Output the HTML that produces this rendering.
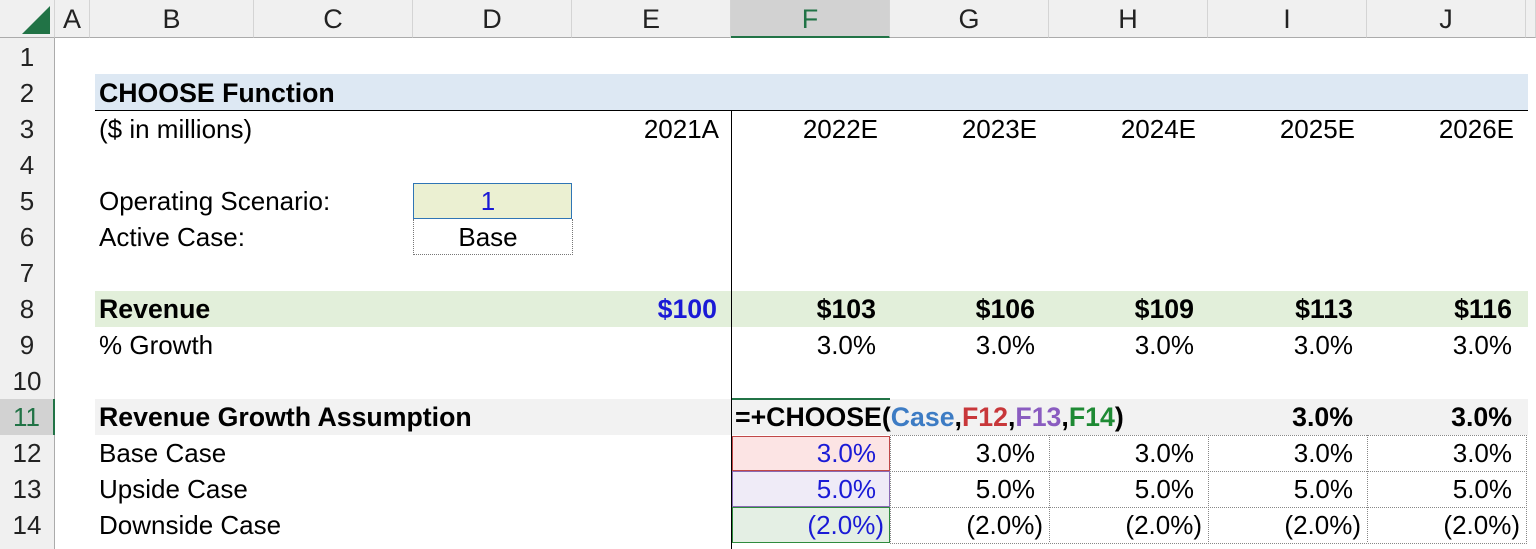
<!DOCTYPE html><html><head><style>
html,body{margin:0;width:1536px;height:549px;overflow:hidden}
body{background:#fff;font-family:"Liberation Sans",Arial,sans-serif;font-size:26px;color:#000;position:relative}
.a{position:absolute;white-space:nowrap;line-height:36px;height:36px}
.r{text-align:right}.c{text-align:center}.b{font-weight:bold;font-size:26.7px}
.hd{position:absolute;top:0;height:38px;line-height:38px;background:#f0f0f0;text-align:center;font-size:27px;color:#222;border-right:1px solid #d4d4d4;box-sizing:border-box;border-bottom:1px solid #ababab}
.rh{position:absolute;left:0;width:55px;height:36px;line-height:36px;background:#f0f0f0;text-align:center;font-size:26px;color:#222;border-right:1px solid #ababab;box-sizing:border-box}
.blue{color:#1a1ad6}
</style></head><body>
<div class="hd" style="left:0;width:55px"><svg width="55" height="38" style="position:absolute;left:0;top:0"><polygon points="50,6 50,34 22,34" fill="#217346"/></svg></div>
<div class="hd" style="left:55px;width:35px">A</div>
<div class="hd" style="left:90px;width:164px">B</div>
<div class="hd" style="left:254px;width:159px">C</div>
<div class="hd" style="left:413px;width:159px">D</div>
<div class="hd" style="left:572px;width:159px">E</div>
<div class="hd" style="left:731px;width:159px;background:#d2d2d2;color:#217346;border-bottom:2px solid #217346">F</div>
<div class="hd" style="left:890px;width:159px">G</div>
<div class="hd" style="left:1049px;width:159px">H</div>
<div class="hd" style="left:1208px;width:159px">I</div>
<div class="hd" style="left:1367px;width:159px">J</div>
<div class="hd" style="left:1526px;width:10px"></div>
<div class="rh" style="top:38px;height:511px"></div>
<div class="rh" style="top:39px">1</div><div class="rh" style="top:75px">2</div><div class="rh" style="top:111px">3</div><div class="rh" style="top:147px">4</div><div class="rh" style="top:183px">5</div><div class="rh" style="top:219px">6</div><div class="rh" style="top:255px">7</div><div class="rh" style="top:291px">8</div><div class="rh" style="top:327px">9</div><div class="rh" style="top:363px">10</div><div class="rh" style="top:399px;background:#d2d2d2;color:#217346;border-right:2px solid #217346">11</div><div class="rh" style="top:435px">12</div><div class="rh" style="top:471px">13</div><div class="rh" style="top:507px">14</div>
<div style="position:absolute;left:95px;top:74px;width:1433px;height:36px;background:#dde8f3;border-bottom:1px solid #000"></div>
<div style="position:absolute;left:95px;top:291px;width:1433px;height:36px;background:#e2efda"></div>
<div style="position:absolute;left:95px;top:399px;width:1433px;height:36px;background:#f2f2f2"></div>
<div style="position:absolute;left:731px;top:110px;width:1px;height:439px;background:#000"></div>
<div style="position:absolute;left:413px;top:183px;width:157px;height:34px;background:#ebf0d2;border:1px solid #2f75b5"></div>
<div style="position:absolute;left:413px;top:219px;width:158px;height:35px;border:1px dotted #777;border-top:none"></div>
<div style="position:absolute;left:732px;top:436px;width:156px;height:33px;background:#fce4e4;border:1px solid #c04848"></div>
<div style="position:absolute;left:732px;top:471px;width:156px;height:34px;background:#efebf7;border:1px solid #8a6ab4"></div>
<div style="position:absolute;left:732px;top:507px;width:156px;height:34px;background:#e4efe4;border:1.5px solid #2e8b3e"></div>
<div style="position:absolute;left:732px;top:398px;width:158px;height:2px;background:#217346"></div>
<svg style="position:absolute;left:890px;top:435px" width="640" height="110"><g stroke="#888" stroke-dasharray="1,1" fill="none"><path d="M0.5 0V108M159.5 0V108M318.5 0V108M477.5 0V108M636.5 0V108M0 0.5H637M0 36.5H637M0 72.5H637M0 108.5H637"/></g></svg>
<div class="a b" style="left:99px;top:75px">CHOOSE Function</div>
<div class="a" style="left:99px;top:111px">($ in millions)</div>
<div class="a r" style="left:572px;width:147px;top:111px">2021A</div>
<div class="a r" style="left:731px;width:147px;top:111px">2022E</div>
<div class="a r" style="left:890px;width:147px;top:111px">2023E</div>
<div class="a r" style="left:1049px;width:147px;top:111px">2024E</div>
<div class="a r" style="left:1208px;width:147px;top:111px">2025E</div>
<div class="a r" style="left:1367px;width:147px;top:111px">2026E</div>
<div class="a" style="left:99px;top:183px">Operating Scenario:</div>
<div class="a c blue" style="left:413px;width:150px;top:183px">1</div>
<div class="a" style="left:99px;top:219px">Active Case:</div>
<div class="a c" style="left:413px;width:150px;top:219px">Base</div>
<div class="a b" style="left:99px;top:291px">Revenue</div>
<div class="a r b blue" style="left:572px;width:145px;top:291px">$100</div>
<div class="a r b" style="left:731px;width:145px;top:291px">$103</div>
<div class="a r b" style="left:890px;width:145px;top:291px">$106</div>
<div class="a r b" style="left:1049px;width:145px;top:291px">$109</div>
<div class="a r b" style="left:1208px;width:145px;top:291px">$113</div>
<div class="a r b" style="left:1367px;width:145px;top:291px">$116</div>
<div class="a" style="left:99px;top:327px">% Growth</div>
<div class="a r" style="left:731px;width:145px;top:327px">3.0%</div>
<div class="a r" style="left:890px;width:145px;top:327px">3.0%</div>
<div class="a r" style="left:1049px;width:145px;top:327px">3.0%</div>
<div class="a r" style="left:1208px;width:145px;top:327px">3.0%</div>
<div class="a r" style="left:1367px;width:145px;top:327px">3.0%</div>
<div class="a b" style="left:99px;top:399px">Revenue Growth Assumption</div>
<div class="a b" style="left:735px;top:399px">=+CHOOSE(<span style="color:#3d7cc4">Case</span>,<span style="color:#c8373a">F12</span>,<span style="color:#8a5cc0">F13</span>,<span style="color:#1e8a34">F14</span>)</div>
<div class="a r b" style="left:1208px;width:145px;top:399px">3.0%</div>
<div class="a r b" style="left:1367px;width:145px;top:399px">3.0%</div>
<div class="a" style="left:99px;top:435px">Base Case</div>
<div class="a" style="left:99px;top:471px">Upside Case</div>
<div class="a" style="left:99px;top:507px">Downside Case</div>
<div class="a r blue" style="left:731px;width:145px;top:435px">3.0%</div>
<div class="a r blue" style="left:731px;width:145px;top:471px">5.0%</div>
<div class="a r blue" style="left:731px;width:153px;top:507px">(2.0%)</div>
<div class="a r" style="left:890px;width:145px;top:435px">3.0%</div><div class="a r" style="left:1049px;width:145px;top:435px">3.0%</div><div class="a r" style="left:1208px;width:145px;top:435px">3.0%</div><div class="a r" style="left:1367px;width:145px;top:435px">3.0%</div>
<div class="a r" style="left:890px;width:145px;top:471px">5.0%</div><div class="a r" style="left:1049px;width:145px;top:471px">5.0%</div><div class="a r" style="left:1208px;width:145px;top:471px">5.0%</div><div class="a r" style="left:1367px;width:145px;top:471px">5.0%</div>
<div class="a r" style="left:890px;width:153px;top:507px">(2.0%)</div><div class="a r" style="left:1049px;width:153px;top:507px">(2.0%)</div><div class="a r" style="left:1208px;width:153px;top:507px">(2.0%)</div><div class="a r" style="left:1367px;width:153px;top:507px">(2.0%)</div>
</body></html>
